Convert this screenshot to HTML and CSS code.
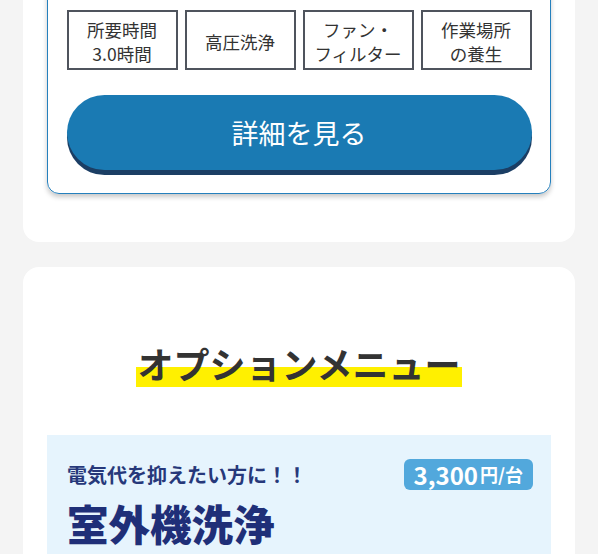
FILE: index.html
```html
<!DOCTYPE html>
<html lang="ja">
<head>
<meta charset="utf-8">
<link rel="stylesheet" href="styles.css">
</head>
<body>
<div class="card card-plan">
  <div class="plan">
    <div class="tags">
      <div class="tag">所要時間<br>3.0時間</div>
      <div class="tag">高圧洗浄</div>
      <div class="tag">ファン・<br>フィルター</div>
      <div class="tag">作業場所<br>の養生</div>
    </div>
    <a class="btn" href="#">詳細を見る</a>
  </div>
</div>
<div class="card card-option">
  <h2 class="heading"><span class="marker">オプションメニュー</span></h2>
  <div class="option">
    <div class="option-top">
      <p class="lead">電気代を抑えたい方に！！</p>
      <span class="price"><span class="num">3,300</span><span class="unit">円/台</span></span>
    </div>
    <h3 class="option-title">室外機洗浄</h3>
  </div>
</div>
</body>
</html>
```
FILE: styles.css
```css
* { box-sizing: border-box; }
html, body { margin: 0; padding: 0; }
body {
  background: #f4f4f4;
  font-family: "Noto Sans CJK JP", "Noto Sans", sans-serif;
  color: #333;
  padding: 0 23px;
  overflow: hidden;
}
.card {
  background: #fff;
  border-radius: 16px;
}
.card-plan {
  margin-top: -40px;
  padding: 0 24px 48px;
}
.plan {
  border: 1.5px solid #2580bd;
  border-radius: 12px;
  padding: 48.5px 18.5px 18px;
  box-shadow: 0 3px 5px rgba(0,0,0,0.22);
}
.tags {
  display: grid;
  grid-template-columns: repeat(4, 1fr);
  gap: 7px;
}
.tag {
  height: 60px;
  border: 2px solid #4f545d;
  padding-top: 4px;
  display: flex;
  align-items: center;
  justify-content: center;
  text-align: center;
  font-size: 17.5px;
  line-height: 24px;
  color: #333;
}
.btn {
  display: flex;
  align-items: center;
  justify-content: center;
  margin-top: 25px;
  height: 75px;
  border-radius: 40px;
  background: #1a7ab3;
  box-shadow: 0 5px 0 #1b3e64;
  color: #fff;
  font-size: 27px;
  text-decoration: none;
  margin-bottom: 5px;
}
.card-option {
  margin-top: 25px;
  padding: 74px 24px 40px;
}
.heading {
  margin: 0;
  text-align: center;
  font-size: 36px;
  font-weight: 700;
  line-height: 44px;
  color: #333;
}
.marker {
  display: inline-block;
  padding: 0 2px;
  background: linear-gradient(transparent 26px, #fff000 26px, #fff000 45px);
  height: 46px;
}
.option {
  margin-top: 48px;
  background: #e6f4fd;
  padding: 24px 18px 30px 20px;
}
.option-top {
  display: flex;
  justify-content: space-between;
  align-items: center;
}
.lead {
  margin: 0;
  font-size: 20px;
  font-weight: 700;
  color: #26387a;
}
.price {
  background: #52a8dc;
  color: #fff;
  border-radius: 6px;
  height: 31px;
  padding: 0 10px;
  display: flex;
  align-items: center;
  font-weight: 700;
}
.num { font-size: 24px; font-weight: 700; line-height: 31px; }
.unit { font-size: 18px; line-height: 31px; margin-left: 2px; }
.option-title {
  margin: 5px 0 0;
  font-size: 41.5px;
  font-weight: 900;
  line-height: 56px;
  color: #1f2f78;
}
```
